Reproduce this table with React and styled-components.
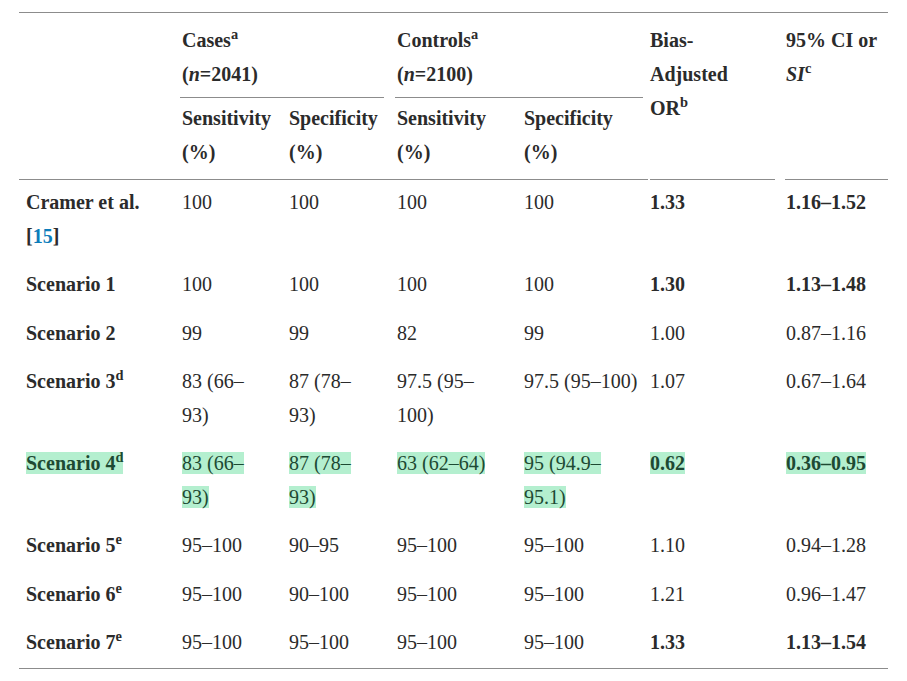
import React from "react";
import styled, { createGlobalStyle } from "styled-components";

const Global = createGlobalStyle`
  html, body { margin: 0; padding: 0; background: #ffffff; }
  body {
    font-family: "Liberation Serif", "Times New Roman", serif;
    font-size: 20px;
    color: #2b2b2b;
  }
`;

const Page = styled.div`
  padding: 12px 0 0 19px;
`;

const Table = styled.div`
  display: grid;
  grid-template-columns: 161px 107px 108px 127px 126px 136px 104px;
  width: 869px;
  border-top: 1px solid #8c8c8c;
  border-bottom: 1px solid #8c8c8c;
  line-height: 34px;
`;

const HeadCell = styled.div`
  grid-column: ${(p) => p.$col};
  grid-row: ${(p) => p.$row};
  padding: ${(p) => p.$pad || "0"};
  margin: 0 ${(p) => p.$mr || 0}px 0 ${(p) => p.$ml || 0}px;
  font-weight: 700;
  white-space: nowrap;
  border-bottom: 1px solid #8c8c8c;
`;

const Cell = styled.div`
  padding: 5px 0 9.25px ${(p) => (p.$first ? 7 : 2)}px;
  font-weight: ${(p) => (p.$bold || p.$first ? 700 : 400)};
  white-space: nowrap;
`;

const Sup = styled.sup`
  font-size: 0.72em;
  vertical-align: super;
  line-height: 0;
  font-weight: 700;
`;

const Em = styled.i`
  font-style: italic;
`;

const Ref = styled.span`
  color: #0c7dbb;
`;

const Mark = styled.span`
  background: #b4efcf;
  color: #1d4a33;
  -webkit-box-decoration-break: clone;
  box-decoration-break: clone;
`;

const rows = [
  {
    label: (
      <>
        Cramer et al.
        <br />[<Ref>15</Ref>]
      </>
    ),
    vals: ["100", "100", "100", "100"],
    or: "1.33",
    ci: "1.16–1.52",
    bold: true,
  },
  { label: "Scenario 1", vals: ["100", "100", "100", "100"], or: "1.30", ci: "1.13–1.48", bold: true },
  { label: "Scenario 2", vals: ["99", "99", "82", "99"], or: "1.00", ci: "0.87–1.16" },
  {
    label: (
      <>
        Scenario 3<Sup>d</Sup>
      </>
    ),
    vals: [["83 (66–", "93)"], ["87 (78–", "93)"], ["97.5 (95–", "100)"], "97.5 (95–100)"],
    or: "1.07",
    ci: "0.67–1.64",
  },
  {
    label: (
      <>
        Scenario 4<Sup>d</Sup>
      </>
    ),
    vals: [["83 (66–", "93)"], ["87 (78–", "93)"], "63 (62–64)", ["95 (94.9–", "95.1)"]],
    or: "0.62",
    ci: "0.36–0.95",
    bold: true,
    mark: true,
  },
  {
    label: (
      <>
        Scenario 5<Sup>e</Sup>
      </>
    ),
    vals: ["95–100", "90–95", "95–100", "95–100"],
    or: "1.10",
    ci: "0.94–1.28",
  },
  {
    label: (
      <>
        Scenario 6<Sup>e</Sup>
      </>
    ),
    vals: ["95–100", "90–100", "95–100", "95–100"],
    or: "1.21",
    ci: "0.96–1.47",
  },
  {
    label: (
      <>
        Scenario 7<Sup>e</Sup>
      </>
    ),
    vals: ["95–100", "95–100", "95–100", "95–100"],
    or: "1.33",
    ci: "1.13–1.54",
    bold: true,
  },
];

function Content({ value, mark }) {
  const inner = Array.isArray(value) ? (
    <>
      {value[0]}
      <br />
      {value[1]}
    </>
  ) : (
    value
  );
  return mark ? <Mark>{inner}</Mark> : inner;
}

export default function App() {
  return (
    <>
      <Global />
      <Page>
        <Table>
          <HeadCell $col="1" $row="1 / 3" />
          <HeadCell $col="2 / 4" $row="1" $pad="10px 0 6px 2px" $mr={11}>
            Cases<Sup>a</Sup>
            <br />(<Em>n</Em>=2041)
          </HeadCell>
          <HeadCell $col="4 / 6" $row="1" $pad="10px 0 6px 2px" $mr={5}>
            Controls<Sup>a</Sup>
            <br />(<Em>n</Em>=2100)
          </HeadCell>
          <HeadCell $col="6" $row="1 / 3" $pad="10px 0 0 0" $ml={2} $mr={9}>
            Bias-
            <br />
            Adjusted
            <br />
            OR<Sup>b</Sup>
          </HeadCell>
          <HeadCell $col="7" $row="1 / 3" $pad="10px 0 0 1px" $ml={1}>
            95% CI or
            <br />
            <Em>SI</Em>
            <Sup>c</Sup>
          </HeadCell>
          {["Sensitivity", "Specificity", "Sensitivity", "Specificity"].map((t, i) => (
            <HeadCell key={i} $col={String(i + 2)} $row="2" $pad="3px 0 10px 2px">
              {t}
              <br />
              (%)
            </HeadCell>
          ))}

          {rows.map((r, i) => (
            <React.Fragment key={i}>
              <Cell $first>
                <Content value={r.label} mark={r.mark} />
              </Cell>
              {r.vals.map((v, j) => (
                <Cell key={j}>
                  <Content value={v} mark={r.mark} />
                </Cell>
              ))}
              <Cell $bold={r.bold}>
                <Content value={r.or} mark={r.mark} />
              </Cell>
              <Cell $bold={r.bold}>
                <Content value={r.ci} mark={r.mark} />
              </Cell>
            </React.Fragment>
          ))}
        </Table>
      </Page>
    </>
  );
}
